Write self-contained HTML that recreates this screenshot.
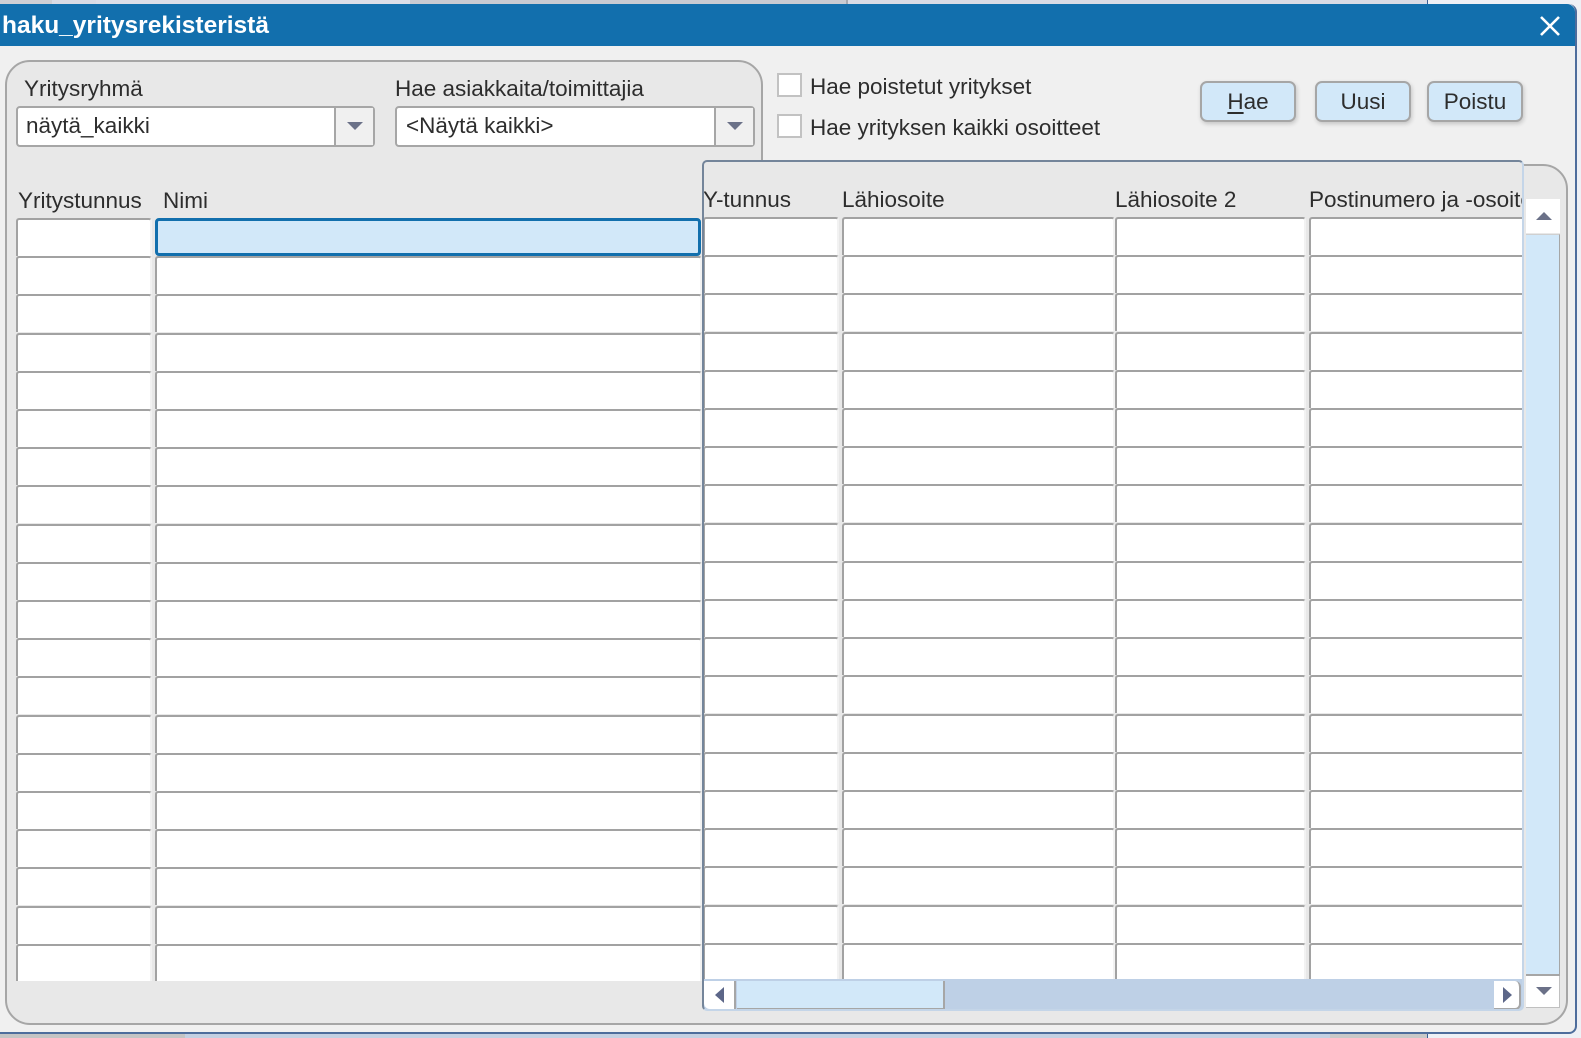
<!DOCTYPE html>
<html lang="fi"><head><meta charset="utf-8"><title>haku_yritysrekisteristä</title>
<style>
html,body{margin:0;padding:0;width:1581px;height:1038px;overflow:hidden;background:#eef0f5;font-family:"Liberation Sans",Arial,sans-serif;color:#2d2d2d;}
.a{position:absolute}
#stage{position:relative;width:1581px;height:1038px;overflow:hidden}
.t{position:absolute;font-size:22.5px;line-height:28px;white-space:nowrap;color:#2d2d2d}
.row{position:absolute;left:0;width:1581px;height:38.2px}
.c{position:absolute;top:0;height:36px;background:#fff;border-top:2px solid #a2a2a2;border-left:2px solid #a2a2a2;border-right:2px solid #f2f2f2;border-bottom:0;box-sizing:content-box;border-radius:3px 3px 0 0}
.c1{left:16px;width:132px}.c2{left:155px;width:543px}
.c3{left:703px;width:132px}.c4{left:842px;width:269px}.c5{left:1115px;width:187px}.c6{left:1309px;width:220px}
#leftrows{position:absolute;left:0;top:0;width:702px;height:981px;overflow:hidden}
#rightpanel{position:absolute;left:702px;top:160px;width:822px;height:851px;background:#e8e8e8;border:solid #74859a;border-width:2px;border-right-color:#c4d5e8;border-bottom-color:#c4d5e8;border-radius:5px;box-sizing:border-box;overflow:hidden}
#rightrows{position:absolute;left:-704px;top:-162px;width:1528px;height:985px;overflow:hidden}
.combo{position:absolute;height:41px;background:#fff;border:2px solid #a6a6a6;border-radius:4px;box-sizing:border-box}
.combo b{position:absolute;right:0;top:0;bottom:0;width:39px;background:#f0f0f0;border-left:2px solid #a6a6a6;box-sizing:border-box}
.combo i{position:absolute;left:11px;top:14px;width:0;height:0;border-left:8px solid transparent;border-right:8px solid transparent;border-top:8px solid #6b7188}
.chk{position:absolute;left:777px;width:25px;height:24px;background:#fff;border:2px solid #c2c2c2;box-sizing:border-box}
.btn{position:absolute;top:81px;width:96px;height:41px;background:#d2e8f9;border:2px solid #a6a6a6;border-radius:7px;box-sizing:border-box;box-shadow:1px 2px 4px rgba(0,0,0,.18);text-align:center;font-size:22.5px;line-height:38px;color:#2d2d2d}
.btn u{text-underline-offset:3px}
</style></head><body>
<div id="stage">
<!-- background strips -->
<div class="a" style="left:0;top:0;width:1581px;height:4px;background:#d9dbe5"></div>
<div class="a" style="left:0;top:0;width:52px;height:4px;background:#cfcfd4"></div>
<div class="a" style="left:96px;top:0;width:315px;height:4px;background:#dcdee8"></div>
<div class="a" style="left:410px;top:0;width:437px;height:4px;background:#c9cbd2"></div>
<div class="a" style="left:846px;top:0;width:2px;height:4px;background:#a7a9b0"></div>
<div class="a" style="left:1427px;top:0;width:1px;height:4px;background:#3c5f95"></div>
<div class="a" style="left:1428px;top:0;width:153px;height:4px;background:#eef0f5"></div>
<div class="a" style="left:0;top:1033px;width:185px;height:5px;background:#c4c4c4"></div>
<div class="a" style="left:185px;top:1033px;width:1242px;height:5px;background:#c4d0e2"></div>
<div class="a" style="left:1330px;top:1033px;width:97px;height:5px;background:#c8c8c8"></div>
<div class="a" style="left:1427px;top:1033px;width:1px;height:5px;background:#3c5f95"></div>

<!-- window -->
<div class="a" style="left:0;top:4px;width:1577px;height:1030px;background:#f0f0f0;border-right:2px solid #4e6d9c;border-bottom:2px solid #4e6d9c;border-radius:0 8px 8px 0;box-sizing:border-box"></div>
<div class="a" style="left:0;top:4px;width:1575px;height:42px;background:#126fad;border-radius:0 8px 0 0"></div>
<div class="a" style="left:2px;top:11px;font-size:24.5px;line-height:29px;font-weight:bold;color:#fff;white-space:nowrap">haku_yritysrekisteristä</div>
<svg class="a" style="left:1539px;top:15px" width="22" height="22" viewBox="0 0 22 22"><path d="M2 2L20 20M20 2L2 20" stroke="#fff" stroke-width="2.6" fill="none"/></svg>

<!-- panel -->
<svg class="a" style="left:0;top:0;display:block" width="1581" height="1038"><path d="M30 61H738A24 24 0 0 1 762 85V165H1543A24 24 0 0 1 1567 189V1000A24 24 0 0 1 1543 1024H30A24 24 0 0 1 6 1000V85A24 24 0 0 1 30 61Z" fill="#e8e8e8" stroke="#a6a6a6" stroke-width="2"/></svg>

<div class="t" style="left:24px;top:75px">Yritysryhmä</div>
<div class="t" style="left:395px;top:75px">Hae asiakkaita/toimittajia</div>
<div class="combo" style="left:16px;top:106px;width:359px"><b><i></i></b></div>
<div class="t" style="left:26px;top:112px">näytä_kaikki</div>
<div class="combo" style="left:395px;top:106px;width:360px"><b><i></i></b></div>
<div class="t" style="left:406px;top:112px">&lt;Näytä kaikki&gt;</div>

<div class="t" style="left:18px;top:187px">Yritystunnus</div>
<div class="t" style="left:163px;top:187px">Nimi</div>

<!-- left rows -->
<div id="leftrows">
<div class="row" style="top:218px"><div class="c c1"></div></div>
<div class="row" style="top:256.2px"><div class="c c1"></div><div class="c c2"></div></div>
<div class="row" style="top:294.4px"><div class="c c1"></div><div class="c c2"></div></div>
<div class="row" style="top:332.6px"><div class="c c1"></div><div class="c c2"></div></div>
<div class="row" style="top:370.8px"><div class="c c1"></div><div class="c c2"></div></div>
<div class="row" style="top:409px"><div class="c c1"></div><div class="c c2"></div></div>
<div class="row" style="top:447.2px"><div class="c c1"></div><div class="c c2"></div></div>
<div class="row" style="top:485.4px"><div class="c c1"></div><div class="c c2"></div></div>
<div class="row" style="top:523.6px"><div class="c c1"></div><div class="c c2"></div></div>
<div class="row" style="top:561.8px"><div class="c c1"></div><div class="c c2"></div></div>
<div class="row" style="top:600px"><div class="c c1"></div><div class="c c2"></div></div>
<div class="row" style="top:638.2px"><div class="c c1"></div><div class="c c2"></div></div>
<div class="row" style="top:676.4px"><div class="c c1"></div><div class="c c2"></div></div>
<div class="row" style="top:714.6px"><div class="c c1"></div><div class="c c2"></div></div>
<div class="row" style="top:752.8px"><div class="c c1"></div><div class="c c2"></div></div>
<div class="row" style="top:791px"><div class="c c1"></div><div class="c c2"></div></div>
<div class="row" style="top:829.2px"><div class="c c1"></div><div class="c c2"></div></div>
<div class="row" style="top:867.4px"><div class="c c1"></div><div class="c c2"></div></div>
<div class="row" style="top:905.6px"><div class="c c1"></div><div class="c c2"></div></div>
<div class="row" style="top:943.8px"><div class="c c1"></div><div class="c c2"></div></div>
</div>
<div class="a" style="left:155px;top:218px;width:546px;height:38px;background:#d2e8f9;border:3.5px solid #126fad;border-radius:4px;box-sizing:border-box"></div>

<!-- checks -->
<div class="chk" style="top:73px"></div>
<div class="t" style="left:810px;top:73px">Hae poistetut yritykset</div>
<div class="chk" style="top:114px"></div>
<div class="t" style="left:810px;top:114px">Hae yrityksen kaikki osoitteet</div>

<!-- buttons -->
<div class="btn" style="left:1200px"><u>H</u>ae</div>
<div class="btn" style="left:1315px">Uusi</div>
<div class="btn" style="left:1427px">Poistu</div>

<!-- right panel -->
<div id="rightpanel">
<div class="t" style="left:-1px;top:24px">Y-tunnus</div>
<div class="t" style="left:138px;top:24px">Lähiosoite</div>
<div class="t" style="left:411px;top:24px">Lähiosoite 2</div>
<div class="t" style="left:605px;top:24px">Postinumero ja -osoite</div>
<div id="rightrows">
<div class="row" style="top:217px"><div class="c c3"></div><div class="c c4"></div><div class="c c5"></div><div class="c c6"></div></div>
<div class="row" style="top:255.2px"><div class="c c3"></div><div class="c c4"></div><div class="c c5"></div><div class="c c6"></div></div>
<div class="row" style="top:293.4px"><div class="c c3"></div><div class="c c4"></div><div class="c c5"></div><div class="c c6"></div></div>
<div class="row" style="top:331.6px"><div class="c c3"></div><div class="c c4"></div><div class="c c5"></div><div class="c c6"></div></div>
<div class="row" style="top:369.8px"><div class="c c3"></div><div class="c c4"></div><div class="c c5"></div><div class="c c6"></div></div>
<div class="row" style="top:408px"><div class="c c3"></div><div class="c c4"></div><div class="c c5"></div><div class="c c6"></div></div>
<div class="row" style="top:446.2px"><div class="c c3"></div><div class="c c4"></div><div class="c c5"></div><div class="c c6"></div></div>
<div class="row" style="top:484.4px"><div class="c c3"></div><div class="c c4"></div><div class="c c5"></div><div class="c c6"></div></div>
<div class="row" style="top:522.6px"><div class="c c3"></div><div class="c c4"></div><div class="c c5"></div><div class="c c6"></div></div>
<div class="row" style="top:560.8px"><div class="c c3"></div><div class="c c4"></div><div class="c c5"></div><div class="c c6"></div></div>
<div class="row" style="top:599px"><div class="c c3"></div><div class="c c4"></div><div class="c c5"></div><div class="c c6"></div></div>
<div class="row" style="top:637.2px"><div class="c c3"></div><div class="c c4"></div><div class="c c5"></div><div class="c c6"></div></div>
<div class="row" style="top:675.4px"><div class="c c3"></div><div class="c c4"></div><div class="c c5"></div><div class="c c6"></div></div>
<div class="row" style="top:713.6px"><div class="c c3"></div><div class="c c4"></div><div class="c c5"></div><div class="c c6"></div></div>
<div class="row" style="top:751.8px"><div class="c c3"></div><div class="c c4"></div><div class="c c5"></div><div class="c c6"></div></div>
<div class="row" style="top:790px"><div class="c c3"></div><div class="c c4"></div><div class="c c5"></div><div class="c c6"></div></div>
<div class="row" style="top:828.2px"><div class="c c3"></div><div class="c c4"></div><div class="c c5"></div><div class="c c6"></div></div>
<div class="row" style="top:866.4px"><div class="c c3"></div><div class="c c4"></div><div class="c c5"></div><div class="c c6"></div></div>
<div class="row" style="top:904.6px"><div class="c c3"></div><div class="c c4"></div><div class="c c5"></div><div class="c c6"></div></div>
<div class="row" style="top:942.8px"><div class="c c3"></div><div class="c c4"></div><div class="c c5"></div><div class="c c6"></div></div>
</div>
<!-- horizontal scrollbar -->
<div class="a" style="left:-2px;top:817px;width:822px;height:32px;background:#bed0e6"></div>
<div class="a" style="left:0;top:819px;width:30px;height:28px;background:#fff;border-right:2px solid #a6a6a6;border-radius:0 0 0 6px;box-sizing:content-box"></div>
<div class="a" style="left:11px;top:825px;width:0;height:0;border-top:8px solid transparent;border-bottom:8px solid transparent;border-right:9px solid #5c6688"></div>
<div class="a" style="left:33px;top:819px;width:206px;height:27px;background:#d2e8f9;border-right:2px solid #a6a6a6;border-bottom:2px solid #a6a6a6"></div>
<div class="a" style="left:790px;top:819px;width:25px;height:27px;background:#fff;border-right:2px solid #a6a6a6;border-bottom:2px solid #a6a6a6;border-radius:0 6px 6px 0"></div>
<div class="a" style="left:799px;top:825px;width:0;height:0;border-top:8px solid transparent;border-bottom:8px solid transparent;border-left:9px solid #5c6688"></div>
</div>

<!-- vertical scrollbar -->
<div class="a" style="left:1526px;top:199px;width:34px;height:34px;background:#fff"></div>
<div class="a" style="left:1536px;top:212px;width:0;height:0;border-left:8px solid transparent;border-right:8px solid transparent;border-bottom:8px solid #6b7188"></div>
<div class="a" style="left:1526px;top:234px;width:33px;height:739px;background:#d2e8f9;border-right:1.5px solid #a6a6a6;border-top:1.5px solid #d0d0d0;border-bottom:2px solid #a6a6a6"></div>
<div class="a" style="left:1526px;top:976px;width:33px;height:31px;background:#fff;border-right:1.5px solid #c0c0c0;border-bottom:1.5px solid #c0c0c0"></div>
<div class="a" style="left:1536px;top:987px;width:0;height:0;border-left:8px solid transparent;border-right:8px solid transparent;border-top:8px solid #6b7188"></div>
</div>
</body></html>
